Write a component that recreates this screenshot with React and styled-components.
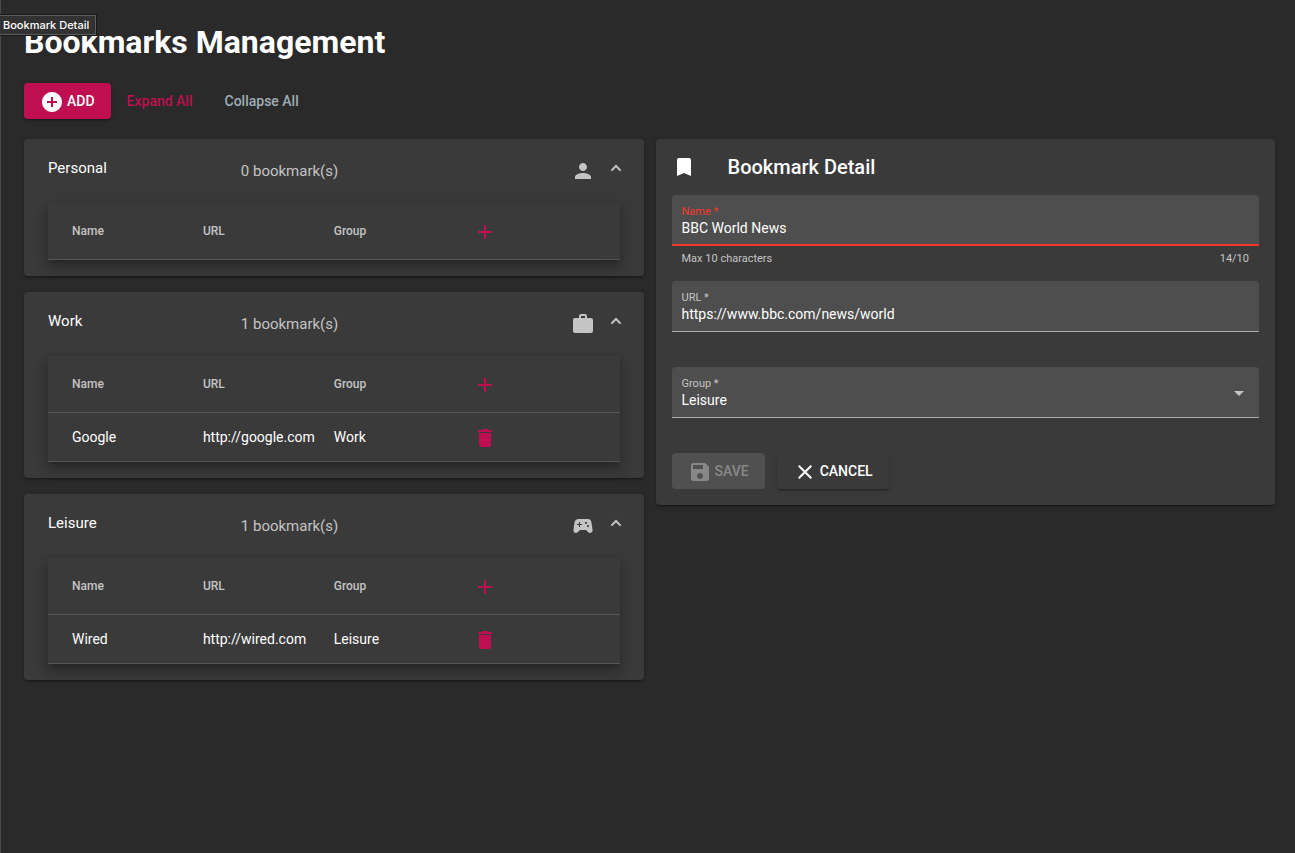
import React, { useState } from "react";
import styled, { createGlobalStyle, css } from "styled-components";
import {
  MdAdd,
  MdAddCircle,
  MdArrowDropDown,
  MdBookmark,
  MdClose,
  MdDelete,
  MdPerson,
  MdSave,
  MdSportsEsports,
  MdWork,
} from "react-icons/md";

const color = {
  page: "#2a2a2a",
  card: "#3a3a3a",
  field: "#4e4e4e",
  primary: "#bf0f50",
  warn: "#f9362f",
  muted: "#c4c4c4",
  line: "#555555",
};

const GlobalStyle = createGlobalStyle`
  *, *::before, *::after { box-sizing: border-box; }
  body {
    margin: 0;
    background: ${color.page};
    color: #fff;
    font-family: Roboto, "Helvetica Neue", "Liberation Sans", sans-serif;
    font-size: 14px;
    line-height: 20px;
  }
  button, input, select { font: inherit; color: inherit; }
  button { cursor: pointer; }
`;

const Page = styled.div`
  position: relative;
  min-height: 100vh;
  padding: 24px 20px 24px 23px;
  border-left: 1px solid #4a4a4a;
`;

const Tooltip = styled.div`
  position: absolute;
  top: 15px;
  left: -1px;
  padding: 0 6px 0 3px;
  border: 1px solid #5c5c5c;
  border-left: 0;
  outline: 1px solid #1a1a1a;
  background: #323232;
  font-family: Inter, sans-serif;
  font-size: 11px;
  font-weight: 500;
  line-height: 18px;
`;

const PageTitle = styled.h1`
  margin: 0 0 23px;
  font-size: 32px;
  font-weight: 700;
  line-height: 36px;
`;

const Toolbar = styled.div`
  display: flex;
  margin-bottom: 20px;
`;

const Button = styled.button`
  display: inline-flex;
  align-items: center;
  gap: ${(p) => (p.$plain ? 0 : "3px")};
  height: 36px;
  padding: 0 16px;
  border: 0;
  border-radius: 4px;
  background: transparent;
  color: ${(p) => p.$color || "#fff"};
  font-weight: 500;
  white-space: nowrap;

  svg {
    width: 24px;
    height: 24px;
    margin-top: 2px;
  }

  ${(p) =>
    p.$raised &&
    css`
      background: ${p.$raised};
      box-shadow: 0 3px 1px -2px rgba(0, 0, 0, 0.2),
        0 2px 2px 0 rgba(0, 0, 0, 0.14), 0 1px 5px 0 rgba(0, 0, 0, 0.12);
    `}

  &:disabled {
    background: #505050;
    color: #888888;
    box-shadow: none;
    cursor: default;
  }
`;

const Columns = styled.main`
  display: grid;
  grid-template-columns: 1fr 1fr;
  align-items: start;
  gap: 12px;
`;

const GroupList = styled.div`
  display: grid;
  gap: 16px;
`;

const Card = styled.section`
  border-radius: 4px;
  background: ${color.card};
  box-shadow: 0 3px 1px -2px rgba(0, 0, 0, 0.2),
    0 2px 2px 0 rgba(0, 0, 0, 0.14), 0 1px 5px 0 rgba(0, 0, 0, 0.12);
`;

const GroupHeader = styled.button`
  display: flex;
  gap: 16px;
  width: 100%;
  height: 64px;
  padding: 0 23px 0 24px;
  border: 0;
  background: transparent;
  font-size: 15px;
  text-align: left;
`;

const GroupName = styled.span`
  flex: 1 1 0;
  align-self: center;
  padding-bottom: 6px;
`;

const GroupSummary = styled.span`
  display: flex;
  flex: 2 1 0;
  align-items: center;
  align-self: center;
  justify-content: space-between;
  color: ${color.muted};

  svg {
    width: 24px;
    height: 24px;
  }
`;

const Chevron = styled.svg`
  align-self: center;
  width: 10px;
  height: 10px;
  margin-bottom: 6px;
  overflow: visible;
  transform: ${(p) => (p.$open ? "none" : "rotate(180deg)")};
`;

const GroupBody = styled.div`
  padding: 0 24px 16px;
`;

const Table = styled.table`
  display: block;
  background: ${color.card};
  box-shadow: 0 5px 5px -3px rgba(0, 0, 0, 0.2),
    0 8px 10px 1px rgba(0, 0, 0, 0.14), 0 3px 14px 2px rgba(0, 0, 0, 0.12);

  thead,
  tbody {
    display: block;
  }
`;

const Row = styled.tr`
  display: grid;
  grid-template-columns: repeat(4, 1fr);
  align-items: center;
  height: ${(p) => (p.$head ? "57px" : "49px")};
  padding: 0 24px;
  border-bottom: 1px solid ${color.line};
`;

const HeadCell = styled.th`
  padding: 0;
  color: ${color.muted};
  font-size: 12px;
  font-weight: 500;
  text-align: left;
`;

const Cell = styled.td`
  padding: 0;
  white-space: nowrap;
`;

const IconButton = styled.button`
  display: flex;
  align-items: center;
  justify-content: center;
  width: 40px;
  height: 40px;
  padding: 2px 0 0;
  border: 0;
  border-radius: 50%;
  background: transparent;
  color: ${color.primary};

  svg {
    width: 24px;
    height: 24px;
  }
`;

const DetailCard = styled(Card)`
  padding: 16px;
`;

const DetailHeader = styled.header`
  display: grid;
  grid-template-columns: 40px 1fr;
  gap: 16px;
  margin-bottom: 16px;

  svg {
    width: 24px;
    height: 24px;
  }
`;

const DetailTitle = styled.h2`
  margin: 0;
  font-size: 20px;
  font-weight: 500;
  line-height: 24px;
`;

const FormField = styled.div`
  height: 86px;
`;

const FieldBox = styled.div`
  position: relative;
  height: 51px;
  padding: 10px 10px 0;
  border-bottom: ${(p) =>
    p.$invalid ? `2px solid ${color.warn}` : "1px solid #a9a9a9"};
  border-radius: 4px 4px 0 0;
  background: ${color.field};
`;

const Label = styled.label`
  display: block;
  color: ${(p) => (p.$invalid ? color.warn : color.muted)};
  font-size: 11px;
  line-height: 13px;
`;

const control = css`
  display: block;
  width: 100%;
  height: 20px;
  padding: 0;
  border: 0;
  outline: 0;
  background: transparent;
  appearance: none;
`;

const Input = styled.input`
  ${control}
`;

const Select = styled.select`
  ${control}

  option {
    background: ${color.card};
  }
`;

const SelectArrow = styled(MdArrowDropDown)`
  position: absolute;
  top: 14px;
  right: 8px;
  width: 24px;
  height: 24px;
  color: ${color.muted};
  pointer-events: none;
`;

const Hints = styled.div`
  display: flex;
  justify-content: space-between;
  padding: 6px 10px 0;
  color: ${color.muted};
  font-size: 11px;
  line-height: 13px;
`;

const Actions = styled.div`
  display: flex;
  gap: 12px;
`;

const GROUPS = [
  { name: "Personal", Icon: MdPerson },
  { name: "Work", Icon: MdWork },
  { name: "Leisure", Icon: MdSportsEsports },
];

const BOOKMARKS = [
  { name: "Google", url: "http://google.com", group: "Work" },
  { name: "Wired", url: "http://wired.com", group: "Leisure" },
];

const MAX_NAME = 10;

function BookmarkGroup({ name, Icon, bookmarks, open, onToggle, onDelete }) {
  return (
    <Card>
      <GroupHeader type="button" aria-expanded={open} onClick={onToggle}>
        <GroupName>{name}</GroupName>
        <GroupSummary>
          {`${bookmarks.length} bookmark(s)`}
          <Icon aria-hidden="true" />
        </GroupSummary>
        <Chevron $open={open} viewBox="1 1 10 10" aria-hidden="true">
          <path
            d="M1.4 8.6 6 4l4.6 4.6"
            fill="none"
            stroke={color.muted}
            strokeWidth="2"
          />
        </Chevron>
      </GroupHeader>
      {open && (
        <GroupBody>
          <Table>
            <thead>
              <Row $head>
                <HeadCell scope="col">Name</HeadCell>
                <HeadCell scope="col">URL</HeadCell>
                <HeadCell scope="col">Group</HeadCell>
                <HeadCell scope="col">
                  <IconButton type="button" aria-label={`Add to ${name}`}>
                    <MdAdd />
                  </IconButton>
                </HeadCell>
              </Row>
            </thead>
            <tbody>
              {bookmarks.map((b) => (
                <Row key={b.url}>
                  <Cell>{b.name}</Cell>
                  <Cell>{b.url}</Cell>
                  <Cell>{b.group}</Cell>
                  <Cell>
                    <IconButton
                      type="button"
                      aria-label={`Delete ${b.name}`}
                      onClick={() => onDelete(b)}
                    >
                      <MdDelete />
                    </IconButton>
                  </Cell>
                </Row>
              ))}
            </tbody>
          </Table>
        </GroupBody>
      )}
    </Card>
  );
}

function BookmarkDetail() {
  const [name, setName] = useState("BBC World News");
  const [url, setUrl] = useState("https://www.bbc.com/news/world");
  const [group, setGroup] = useState("Leisure");
  const invalid = name.length > MAX_NAME;

  return (
    <DetailCard>
      <DetailHeader>
        <MdBookmark aria-hidden="true" />
        <DetailTitle>Bookmark Detail</DetailTitle>
      </DetailHeader>
      <form onSubmit={(e) => e.preventDefault()}>
        <FormField>
          <FieldBox $invalid={invalid}>
            <Label htmlFor="name" $invalid={invalid}>Name *</Label>
            <Input
              id="name"
              value={name}
              aria-invalid={invalid}
              onChange={(e) => setName(e.target.value)}
            />
          </FieldBox>
          <Hints>
            <span>Max {MAX_NAME} characters</span>
            <span>{`${name.length}/${MAX_NAME}`}</span>
          </Hints>
        </FormField>
        <FormField>
          <FieldBox>
            <Label htmlFor="url">URL *</Label>
            <Input id="url" value={url} onChange={(e) => setUrl(e.target.value)} />
          </FieldBox>
        </FormField>
        <FormField>
          <FieldBox>
            <Label htmlFor="group">Group *</Label>
            <Select
              id="group"
              value={group}
              onChange={(e) => setGroup(e.target.value)}
            >
              {GROUPS.map((g) => (
                <option key={g.name}>{g.name}</option>
              ))}
            </Select>
            <SelectArrow aria-hidden="true" />
          </FieldBox>
        </FormField>
        <Actions>
          <Button type="submit" disabled={invalid}>
            <MdSave aria-hidden="true" />
            SAVE
          </Button>
          <Button type="button" $raised={color.card}>
            <MdClose aria-hidden="true" />
            CANCEL
          </Button>
        </Actions>
      </form>
    </DetailCard>
  );
}

export default function App() {
  const [bookmarks, setBookmarks] = useState(BOOKMARKS);
  const [closed, setClosed] = useState([]);

  const toggle = (name) =>
    setClosed((c) =>
      c.includes(name) ? c.filter((n) => n !== name) : [...c, name]
    );

  return (
    <Page>
      <GlobalStyle />
      <PageTitle>Bookmarks Management</PageTitle>
      <Toolbar>
        <Button type="button" $raised={color.primary}>
          <MdAddCircle aria-hidden="true" />
          ADD
        </Button>
        <Button
          type="button"
          $plain
          $color={color.primary}
          onClick={() => setClosed([])}
        >
          Expand All
        </Button>
        <Button
          type="button"
          $plain
          $color="#9fadb5"
          onClick={() => setClosed(GROUPS.map((g) => g.name))}
        >
          Collapse All
        </Button>
      </Toolbar>
      <Columns>
        <GroupList>
          {GROUPS.map(({ name, Icon }) => (
            <BookmarkGroup
              key={name}
              name={name}
              Icon={Icon}
              bookmarks={bookmarks.filter((b) => b.group === name)}
              open={!closed.includes(name)}
              onToggle={() => toggle(name)}
              onDelete={(b) => setBookmarks((all) => all.filter((x) => x !== b))}
            />
          ))}
        </GroupList>
        <BookmarkDetail />
      </Columns>
      <Tooltip role="tooltip">Bookmark Detail</Tooltip>
    </Page>
  );
}
